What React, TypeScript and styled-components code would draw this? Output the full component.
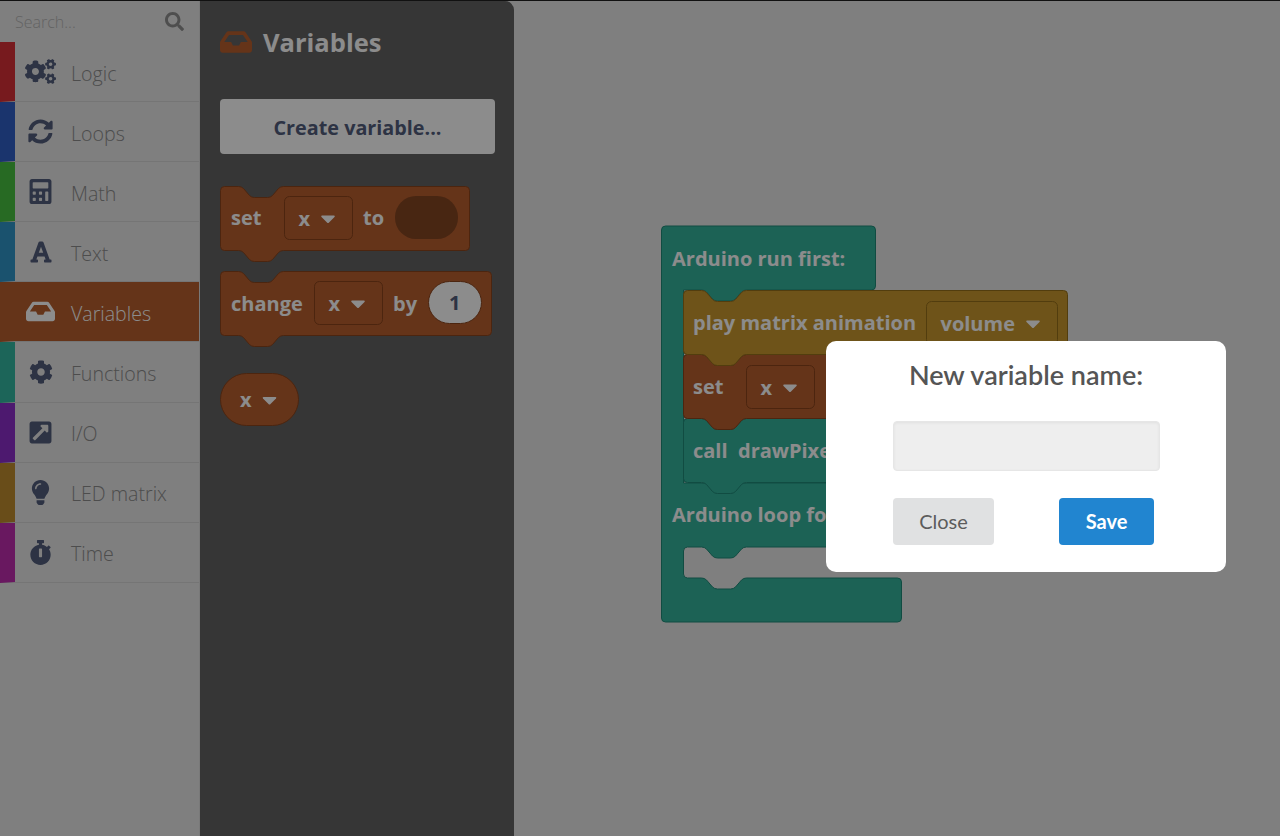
import styled, {createGlobalStyle} from "styled-components";
import type {IconType} from "react-icons";
import {
  FaCalculator,
  FaCog,
  FaCogs,
  FaExternalLinkSquareAlt,
  FaFont,
  FaInbox,
  FaLightbulb,
  FaSearch,
  FaStopwatch,
  FaSyncAlt,
} from "react-icons/fa";

const GlobalStyle = createGlobalStyle`
  html, body {
    margin: 0;
    padding: 0;
    height: 100%;
    overflow: hidden;
  }
  * {
    box-sizing: border-box;
  }
`;

const TEAL = "#34b29c";
const TEAL_EDGE = "#1f8a78";
const GOLD = "#c9972e";
const GOLD_EDGE = "#96701b";
const BROWN = "#b85f2e";
const BROWN_EDGE = "#8a441d";

const Page = styled.div`
  position: relative;
  display: flex;
  width: 1280px;
  height: 836px;
  border-top: 1px solid #111;
  background: #e7e7e7;
  overflow: hidden;
  font-family: "Open Sans", "Liberation Sans", sans-serif;
`;
const Sidebar = styled.aside`
  width: 200px;
  flex: none;
  border-right: 1px solid #ddd;
`;
const SearchBar = styled.div`
  display: flex;
  align-items: center;
  height: 41px;
  padding: 0 15px;
  color: #8f8f8f;
  svg {
    flex: none;
    font-size: 19px;
  }
`;
const SearchInput = styled.input`
  flex: 1;
  min-width: 0;
  border: 0;
  padding: 0;
  background: transparent;
  font: 300 16px "Open Sans", sans-serif;
  &::placeholder {
    color: #b5b5b5;
    opacity: 1;
  }
`;
const CategoryRow = styled.div<{$color: string; $active?: boolean}>`
  display: flex;
  align-items: center;
  gap: 15px;
  height: 60.1px;
  padding-left: 10px;
  border-left: 15px solid ${(props) => props.$color};
  border-bottom: 1px solid #d6d6d6;
  background: ${(props) => (props.$active ? props.$color : "transparent")};
  color: ${(props) => (props.$active ? "#fff" : "#8c8c8c")};
  font-size: 19.6px;
  font-weight: 300;
`;
const CategoryIcon = styled.span<{$active?: boolean}>`
  display: flex;
  justify-content: center;
  width: 31px;
  color: ${(props) => (props.$active ? "#fff" : "#525d7c")};
`;
const CategoryLabel = styled.span`
  padding-top: 3px;
`;
const Flyout = styled.section`
  width: 314px;
  flex: none;
  padding: 0 20px;
  border-top-right-radius: 9px;
  background: #636363;
`;
const FlyoutTitle = styled.h2`
  display: flex;
  align-items: center;
  gap: 11px;
  height: 84px;
  margin: 0;
  padding-bottom: 3px;
  color: #fff;
  font-size: 25.5px;
  font-weight: 700;
  svg {
    color: ${BROWN};
  }
`;
const CreateButton = styled.button`
  display: block;
  width: 275px;
  height: 55px;
  margin: 14px 0 32px;
  padding: 1px 0 0;
  border: 0;
  border-radius: 4px;
  background: #fff;
  color: #525d7c;
  font: 700 19.8px "Open Sans", sans-serif;
`;
const BlockList = styled.div`
  display: flex;
  flex-direction: column;
  gap: 8px;
  svg {
    display: block;
    overflow: visible;
  }
`;
const PillBlock = styled.svg`
  margin-top: 17px;
`;
const Workspace = styled.main`
  position: relative;
  flex: 1;
`;
const WorkspaceBlocks = styled.svg`
  position: absolute;
  left: 147px;
  top: 224px;
  overflow: visible;
`;
const BlockLabel = styled.text`
  fill: #fff;
  font-family: "Open Sans", "Liberation Sans", sans-serif;
  font-size: 20px;
  font-weight: 700;
`;
const Dim = styled.div`
  position: absolute;
  inset: 0;
  background: rgba(0, 0, 0, 0.45);
`;
const Modal = styled.div`
  position: absolute;
  left: 826px;
  top: 340px;
  width: 400px;
  height: 231px;
  padding: 17px 67px 0;
  border-radius: 10px;
  background: #fff;
  font-family: Lato, "Liberation Sans", sans-serif;
`;
const ModalTitle = styled.h3`
  margin: 0 -20px 29px;
  color: #555;
  font-size: 27px;
  font-weight: 600;
  line-height: 34px;
  text-align: center;
  white-space: nowrap;
`;
const NameInput = styled.input`
  display: block;
  width: 267px;
  height: 50px;
  margin-bottom: 27px;
  border: 1px solid #e6e6e6;
  border-radius: 4px;
  background: #eee;
  box-shadow: inset 0 1px 3px rgba(0, 0, 0, 0.06);
`;
const ModalActions = styled.div`
  display: flex;
  gap: 65px;
`;
const ModalButton = styled.button<{$primary?: boolean}>`
  width: ${(props) => (props.$primary ? "95px" : "101px")};
  height: 47px;
  padding: 0 0 1px;
  border: 0;
  border-radius: 4px;
  background: ${(props) => (props.$primary ? "#2185d0" : "#e0e1e2")};
  color: ${(props) => (props.$primary ? "#fff" : "#5c5c5c")};
  font-family: Lato, "Liberation Sans", sans-serif;
  font-size: 20px;
  font-weight: ${(props) => (props.$primary ? 700 : 400)};
`;

// notch drawn left to right, dipping 11px below the edge
const notch = (x: number, y: number) =>
  `H${x + 18} Q${x + 21} ${y} ${x + 23} ${y + 2} L${x + 29} ${y + 9} Q${x + 31} ${y + 11} ${x + 34} ${y + 11} ` +
  `H${x + 47} Q${x + 50} ${y + 11} ${x + 52} ${y + 9} L${x + 58} ${y + 2} Q${x + 60} ${y} ${x + 63} ${y} `;
// same notch, right to left
const notchBack = (x: number, y: number) =>
  `H${x + 63} Q${x + 60} ${y} ${x + 58} ${y + 2} L${x + 52} ${y + 9} Q${x + 50} ${y + 11} ${x + 47} ${y + 11} ` +
  `H${x + 34} Q${x + 31} ${y + 11} ${x + 29} ${y + 9} L${x + 23} ${y + 2} Q${x + 21} ${y} ${x + 18} ${y} `;

const statementPath = (x: number, y: number, w: number, h: number) =>
  `M${x + 4} ${y} ` +
  notch(x, y) +
  `H${x + w - 4} Q${x + w} ${y} ${x + w} ${y + 4} V${y + h - 4} Q${x + w} ${y + h} ${x + w - 4} ${y + h} ` +
  notchBack(x, y + h) +
  `H${x + 4} Q${x} ${y + h} ${x} ${y + h - 4} V${y + 4} Q${x} ${y} ${x + 4} ${y} Z`;

const ARDUINO_PATH =
  `M4 1 H210 Q214 1 214 5 V61 Q214 65 210 65 ` +
  notchBack(22, 65) +
  `H22 V258 H240 V322 ` +
  notchBack(22, 322) +
  `H26 Q22 322 22 326 V349 Q22 353 26 353 ` +
  notch(22, 353) +
  `H236 Q240 353 240 357 V393 Q240 397 236 397 H4 Q0 397 0 393 V5 Q0 1 4 1 Z`;

const Caret = ({x, y}: {x: number; y: number}) => (
  <path
    d={`M${x + 1.5} ${y} H${x + 13.5} Q${x + 15} ${y} ${x + 14} ${y + 1.5} L${x + 8.5} ${y + 7} Q${x + 7.5} ${y + 8} ${x + 6.5} ${y + 7} L${x + 1} ${y + 1.5} Q${x} ${y} ${x + 1.5} ${y} Z`}
    fill="#fff"
  />
);

interface IDropdownProps {
  x: number;
  y: number;
  w: number;
  label: string;
  edge: string;
  fill: string;
}
const Dropdown = ({x, y, w, label, edge, fill}: IDropdownProps) => (
  <g>
    <rect x={x} y={y} width={w} height={43} rx={5} fill={fill} stroke={edge} />
    <BlockLabel x={x + 14} y={y + 29}>
      {label}
    </BlockLabel>
    <Caret x={x + w - 32} y={y + 19} />
  </g>
);

const categories: {name: string; color: string; Icon: IconType; size: number; active?: boolean}[] = [
  {name: "Logic", color: "#d93038", Icon: FaCogs, size: 31},
  {name: "Loops", color: "#305fc6", Icon: FaSyncAlt, size: 25},
  {name: "Math", color: "#48c241", Icon: FaCalculator, size: 25},
  {name: "Text", color: "#3096c8", Icon: FaFont, size: 24},
  {name: "Variables", color: BROWN, Icon: FaInbox, size: 29, active: true},
  {name: "Functions", color: "#34b8a2", Icon: FaCog, size: 24},
  {name: "I/O", color: "#8d2fcb", Icon: FaExternalLinkSquareAlt, size: 25},
  {name: "LED matrix", color: "#c08d2f", Icon: FaLightbulb, size: 25},
  {name: "Time", color: "#bf2caf", Icon: FaStopwatch, size: 25},
];

const App = () => {
  return (
    <Page>
      <GlobalStyle />
      <Sidebar>
        <SearchBar>
          <SearchInput placeholder="Search..." />
          <FaSearch />
        </SearchBar>
        {categories.map(({name, color, Icon, size, active}) => (
          <CategoryRow key={name} $color={color} $active={active}>
            <CategoryIcon $active={active}>
              <Icon size={size} />
            </CategoryIcon>
            <CategoryLabel>{name}</CategoryLabel>
          </CategoryRow>
        ))}
      </Sidebar>
      <Flyout>
        <FlyoutTitle>
          <FaInbox size={32} />
          Variables
        </FlyoutTitle>
        <CreateButton>Create variable...</CreateButton>
        <BlockList>
          <svg width={252} height={77}>
            <path d={statementPath(0.5, 0.5, 249, 64)} fill={BROWN} stroke={BROWN_EDGE} />
            <BlockLabel x={11} y={39}>
              set
            </BlockLabel>
            <Dropdown x={64.5} y={10.5} w={68} label="x" fill={BROWN} edge={BROWN_EDGE} />
            <BlockLabel x={143} y={39}>
              to
            </BlockLabel>
            <rect x={175} y={10} width={63} height={43} rx={21} fill="#844522" />
          </svg>
          <svg width={274} height={77}>
            <path d={statementPath(0.5, 0.5, 271, 64)} fill={BROWN} stroke={BROWN_EDGE} />
            <BlockLabel x={11} y={40}>
              change
            </BlockLabel>
            <Dropdown x={94.5} y={10.5} w={68} label="x" fill={BROWN} edge={BROWN_EDGE} />
            <BlockLabel x={173} y={40}>
              by
            </BlockLabel>
            <rect x={208.5} y={10.5} width={53} height={42} rx={21} fill="#fff" stroke={BROWN_EDGE} />
            <BlockLabel x={229} y={39} style={{fill: "#525d7c"}}>
              1
            </BlockLabel>
          </svg>
          <PillBlock width={80} height={54}>
            <rect x={0.5} y={0.5} width={78} height={52} rx={26} fill={BROWN} stroke={BROWN_EDGE} />
            <BlockLabel x={20} y={34}>
              x
            </BlockLabel>
            <Caret x={42} y={24} />
          </PillBlock>
        </BlockList>
      </Flyout>
      <Workspace>
        <WorkspaceBlocks width={420} height={400} viewBox="0 0 420 400">
          <path d={ARDUINO_PATH} transform="translate(0.5 0)" fill={TEAL} stroke={TEAL_EDGE} />
          <BlockLabel x={11} y={41}>
            Arduino run first:
          </BlockLabel>
          <BlockLabel x={11} y={297}>
            Arduino loop forever:
          </BlockLabel>
          <path d={statementPath(22.5, 193.5, 300, 64)} fill={TEAL} stroke={TEAL_EDGE} />
          <BlockLabel x={32} y={233}>
            call
          </BlockLabel>
          <BlockLabel x={77} y={233}>
            drawPixel
          </BlockLabel>
          <path d={statementPath(22.5, 129.5, 300, 64)} fill={BROWN} stroke={BROWN_EDGE} />
          <BlockLabel x={32} y={169}>
            set
          </BlockLabel>
          <Dropdown x={85.5} y={140.5} w={68} label="x" fill={BROWN} edge={BROWN_EDGE} />
          <path d={statementPath(22.5, 65.5, 384, 64)} fill={GOLD} stroke={GOLD_EDGE} />
          <BlockLabel x={32} y={105}>
            play matrix animation
          </BlockLabel>
          <Dropdown x={265.5} y={76.5} w={131} label="volume" fill={GOLD} edge={GOLD_EDGE} />
        </WorkspaceBlocks>
      </Workspace>
      <Dim />
      <Modal>
        <ModalTitle>New variable name:</ModalTitle>
        <NameInput />
        <ModalActions>
          <ModalButton>Close</ModalButton>
          <ModalButton $primary>Save</ModalButton>
        </ModalActions>
      </Modal>
    </Page>
  );
};

export default App;
